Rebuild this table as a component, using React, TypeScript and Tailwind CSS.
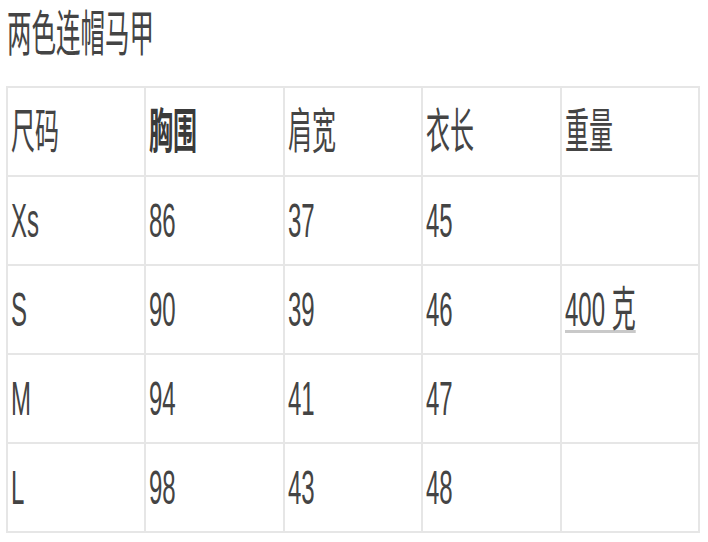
import React from "react";

const headers = ["尺码", "胸围", "肩宽", "衣长", "重量"];

const rows: string[][] = [
  ["Xs", "86", "37", "45", ""],
  ["S", "90", "39", "46", "400克"],
  ["M", "94", "41", "47", ""],
  ["L", "98", "43", "48", ""],
];

function Squeezed(props: { children: React.ReactNode; className?: string }) {
  return (
    <span className={"inline-block origin-left scale-x-[0.5] whitespace-pre " + (props.className || "")}>
      {props.children}
    </span>
  );
}

function Cell(props: { text: string; bold?: boolean }) {
  const isWeight = props.text === "400克";
  return (
    <td className="border-2 border-[#e6e6e6] h-[89px] pl-[3px] align-middle">
      {props.text && !isWeight && (
        <Squeezed className={props.bold ? "font-bold text-[#3a3a3a]" : ""}>{props.text}</Squeezed>
      )}
      {isWeight && (
        // weight cell: number + unit, light underline under both
        <Squeezed className="underline decoration-[#c9c9c9] decoration-[3px] underline-offset-[4px]">
          {"400 克"}
        </Squeezed>
      )}
    </td>
  );
}

export default function App() {
  return (
    <div
      className="w-[708px] h-[542px] bg-white text-[#444] overflow-hidden"
      style={{ fontFamily: '"Liberation Sans", "Noto Sans CJK SC", sans-serif' }}
    >
      <div className="pl-[7px] pt-[4px] text-[49px] leading-[60px]">
        <Squeezed>两色连帽马甲</Squeezed>
      </div>
      <table className="ml-[6px] mt-[22px] w-[694px] table-fixed border-collapse text-[48px] leading-none">
        <tbody>
          <tr>
            {headers.map((h, i) => (
              <Cell key={h} text={h} bold={i === 1} />
            ))}
          </tr>
          {rows.map(r => (
            <tr key={r[0]}>
              {r.map((c, i) => (
                <Cell key={i} text={c} />
              ))}
            </tr>
          ))}
        </tbody>
      </table>
    </div>
  );
}
